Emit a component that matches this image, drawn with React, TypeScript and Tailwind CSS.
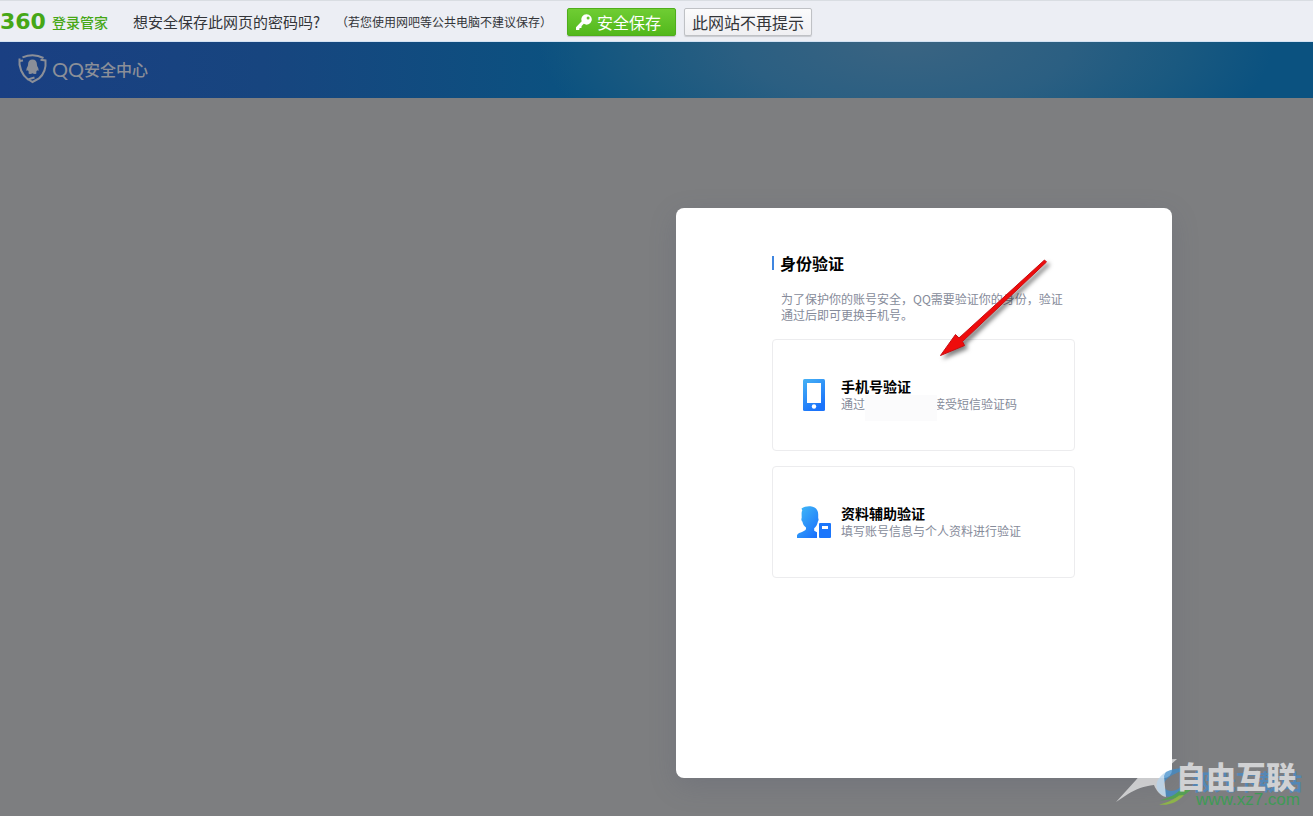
import React from "react";

const KeyIcon = () => (
  <svg width="18" height="18" viewBox="0 0 18 18" aria-hidden="true" className="shrink-0">
    <path
      fill="#fff"
      fillRule="evenodd"
      d="M11.4 1.2a5.200 5.200 0 0 0-4.700 7.100L1 14.200V17h3.200l.4-1.900 1.800-.2.2-1.900 2.200-2.200a5.200 5.200 0 1 0 2.600-9.600Zm1.700 2.200a1.500 1.500 0 1 1 0 3 1.500 1.500 0 0 1 0-3Z"
    />
  </svg>
);

const ShieldLogo = () => (
  <svg width="31" height="30" viewBox="0 0 31 30" aria-hidden="true" className="shrink-0">
    <g fill="none" stroke="#8b8f98" strokeWidth="2">
      <path d="M5.500 3.400C12 .8 20 .8 26.500 4" />
      <path d="M23.500 5.800L28.500 6.500C29.200 13.500 26.500 20.500 22 24.500L15.500 28L11.500 25.500" />
      <path d="M2.500 4.500C1.500 13 5 21 11 25.500L17.500 23.500" />
      <path d="M2.500 7L6 6.500" />
    </g>
    <path
      fill="#8b8f98"
      d="M15.500 5.500c-2.700 0-4.400 1.900-4.400 4.600 0 1.200-.2 1.900-.8 3-.8 1.400-1.100 2.800-.7 3.600.4.500.9 0 1.300-.6.200.9.600 1.500 1.100 2-.8.500-.8 1.600.5 1.800 1.100.2 2.300-.1 3-.6.700.5 1.900.8 3 .6 1.300-.2 1.300-1.300.5-1.800.5-.5.900-1.100 1.100-2 .4.600.9 1.100 1.300.6.400-.8.100-2.200-.7-3.600-.6-1.100-.8-1.800-.8-3 0-2.700-1.700-4.600-4.400-4.600Z"
    />
  </svg>
);

const PhoneIcon = () => (
  <svg width="22" height="32" viewBox="0 0 22 32" aria-hidden="true">
    <defs>
      <linearGradient id="phoneFill" x1="0" y1="0" x2="0.500" y2="1">
        <stop offset="0" stopColor="#46b2f4" />
        <stop offset="1" stopColor="#1a73fb" />
      </linearGradient>
    </defs>
    <rect width="22" height="32" rx="1.500" fill="url(#phoneFill)" />
    <rect x="4" y="4" width="14" height="20" fill="#fff" />
    <circle cx="11" cy="27.500" r="2.200" fill="#fff" />
  </svg>
);

const ProfileIcon = () => (
  <svg width="34" height="32" viewBox="0 0 34 32" aria-hidden="true">
    <defs>
      <linearGradient id="profileFill" x1="0" y1="0" x2="0.800" y2="1">
        <stop offset="0" stopColor="#43bdf6" />
        <stop offset="1" stopColor="#1a72fc" />
      </linearGradient>
    </defs>
    <path
      fill="url(#profileFill)"
      d="M4.500 2.500C7 .6 10.500 0 13.500.3c5 .5 7.700 3.500 7.700 8v4c.6.400.5 2.200-.3 3.200-.5 3-1.800 5.200-3.700 6.800v2.500l2.800 1.500V32H0v-2.300c0-2.200 3-3 6-4.300 1.800-.8 3-1.600 3-2.700v-1.200C7 20 5.800 18 5.400 15.500c-1-.8-1.400-2.700-.7-3.500L4.600 8C4.600 6.500 4.700 5.300 5.300 4.700Z"
    />
    <path
      fill="#1b76fb"
      fillRule="evenodd"
      d="M23 17h10a1 1 0 0 1 1 1v13a1 1 0 0 1-1 1H23a1 1 0 0 1-1-1V18a1 1 0 0 1 1-1Zm2 3v3h6v-3Z"
    />
  </svg>
);

const PointerArrow = () => (
  <svg
    width="120"
    height="110"
    viewBox="0 0 120 110"
    aria-hidden="true"
    className="pointer-events-none absolute top-[46px] left-[258px] drop-shadow-[3px_3px_2px_rgba(0,0,0,0.500)]"
  >
    <path
      d="M6.500 101.500L21.500 80.500L25 84L110.500 6L112.500 8L28.500 87.500L30.500 91.500Z"
      fill="#ee0c0c"
      stroke="#c80d12"
      strokeWidth="1"
      strokeLinejoin="round"
    />
  </svg>
);

const Watermark = () => (
  <div className="pointer-events-none absolute right-[11px] bottom-0 h-[60px] w-[188px]" aria-hidden="true">
    <svg width="92" height="56" viewBox="0 0 92 56" className="absolute top-0 left-0">
      <path
        d="M76 13C62 10 47 15 43 26C40 36 50 43 60 40C67 38 69 33 70 27C66 33 59 37 53 34C45 29 52 18 76 13Z"
        fill="#3f8ccb"
        opacity=".75"
      />
      <path d="M79 30C75 38 66 43 46 44.500C58 41 66 36 69 30Z" fill="#4da54c" opacity=".85" />
      <path d="M70 39C64 46 55 50 45 48.500C54 46.500 61 43 65 39.500Z" fill="#8fb944" opacity=".9" />
      <path
        d="M2 46L22 24C34 10 46 3 63 3L54 11L50 20L52 41C46 40 42 34 40 29C30 30 22 33 14 38Z"
        fill="#fff"
        opacity=".62"
      />
    </svg>
    <span className="absolute top-[14px] right-0 text-[22px] leading-5 font-bold whitespace-nowrap text-[#5487b6]">
      极光下载站
    </span>
    <span className="absolute top-[3px] right-[6px] text-[30px] leading-8 font-black whitespace-nowrap text-[#d0d1d3]">
      自由互联
    </span>
    <span className="absolute right-[2px] bottom-[6px] font-['Liberation_Sans',sans-serif] text-[17px] leading-5 text-[#3f9a55]">
      www.xz7.com
    </span>
  </div>
);

type MethodProps = {
  icon: React.ReactNode;
  title: string;
  children: React.ReactNode;
};

const MethodCard = ({ icon, title, children }: MethodProps) => (
  <button
    type="button"
    className="flex h-28 w-full items-center gap-[10px] rounded border border-[#ececee] bg-white px-6 text-left"
  >
    <span className="flex w-[34px] shrink-0 justify-center">{icon}</span>
    <span className="flex flex-col leading-[18px]">
      <span className="text-sm leading-[18px] font-bold text-black">{title}</span>
      <span className="flex text-xs leading-[18px] text-[#868b9a]">{children}</span>
    </span>
  </button>
);

export default function App() {
  return (
    <div className="relative flex min-h-screen flex-col bg-[#7d7e80] font-['Noto_Sans_CJK_SC',sans-serif]">
      <div className="flex h-[42px] items-center border-t border-b border-t-[#d9dde2] border-b-[#d3e2f3] bg-[#eceef4] pt-[2px] whitespace-nowrap">
        <div className="flex w-[133px] items-center gap-[6px] text-[#46a716]">
          <span className="font-['DejaVu_Sans',sans-serif] text-[22px] leading-6 font-bold">360</span>
          <span className="text-sm font-medium">登录管家</span>
        </div>
        <span className="w-[203px] text-[15px] text-[#333539]">想安全保存此网页的密码吗?</span>
        <span className="w-[231px] text-xs text-[#333539]">（若您使用网吧等公共电脑不建议保存）</span>
        <div className="flex gap-2">
          <button
            type="button"
            className="flex h-7 w-[109px] items-center gap-1 rounded-xs border border-[#4fae1c] bg-linear-to-b from-[#6fcd33] to-[#52b81b] px-[7px] text-base leading-6 text-white shadow-[0_1px_1px_rgba(0,0,0,0.2)]"
          >
            <KeyIcon />
            安全保存
          </button>
          <button
            type="button"
            className="flex h-7 w-32 items-center justify-center rounded-xs border border-[#bfc1c5] bg-linear-to-b from-[#fbfbfc] to-[#efeff2] text-base leading-6 text-[#333539] shadow-[0_1px_1px_rgba(0,0,0,0.15)]"
          >
            此网站不再提示
          </button>
        </div>
      </div>

      <header className="flex h-14 items-center bg-[radial-gradient(ellipse_28%_260%_at_69%_0%,#3a6482_0%,#2b5f82_45%,#1a5980_75%,transparent_100%),linear-gradient(90deg,#1a3f82_0%,#17457f_20%,#0b5280_44%,#0b5280_100%)] pb-[2px] pl-[17px]">
        <a href="#home" className="flex items-center gap-1 text-[#8b8f98]">
          <ShieldLogo />
          <span className="flex items-center whitespace-nowrap">
            <span className="font-['Lato',sans-serif] text-[20px] leading-6">QQ</span>
            <span className="text-base leading-6 font-medium">安全中心</span>
          </span>
        </a>
      </header>

      <main className="flex flex-1 items-start justify-end pt-[110px] pr-[141px] pb-[38px]">
        <section
          aria-labelledby="verify-title"
          className="relative min-h-[570px] w-[496px] rounded-lg bg-white pt-[43px] pr-[97px] pl-24 shadow-[0_8px_28px_rgba(75,80,105,0.2)]"
        >
          <div className="flex items-center gap-[6px]">
            <span className="h-[14px] w-[2px] bg-[#3f86e0]" />
            <h1 id="verify-title" className="text-base leading-6 font-bold text-black">
              身份验证
            </h1>
          </div>
          <p className="mt-4 pl-[9px] text-xs leading-4 text-[#868b9a]">
            为了保护你的账号安全，QQ需要验证你的身份，验证
            <br />
            通过后即可更换手机号。
          </p>
          <div className="mt-4 flex flex-col gap-[15px]">
            <MethodCard icon={<PhoneIcon />} title="手机号验证">
              <span>通过</span>
              <span className="relative z-10 w-[68px]">
                <span className="absolute top-0 left-0 h-[26px] w-[72px] bg-[#fbfbfc]" />
              </span>
              <span>接受短信验证码</span>
            </MethodCard>
            <MethodCard icon={<ProfileIcon />} title="资料辅助验证">
              填写账号信息与个人资料进行验证
            </MethodCard>
          </div>
          <PointerArrow />
        </section>
      </main>

      <Watermark />
    </div>
  );
}
